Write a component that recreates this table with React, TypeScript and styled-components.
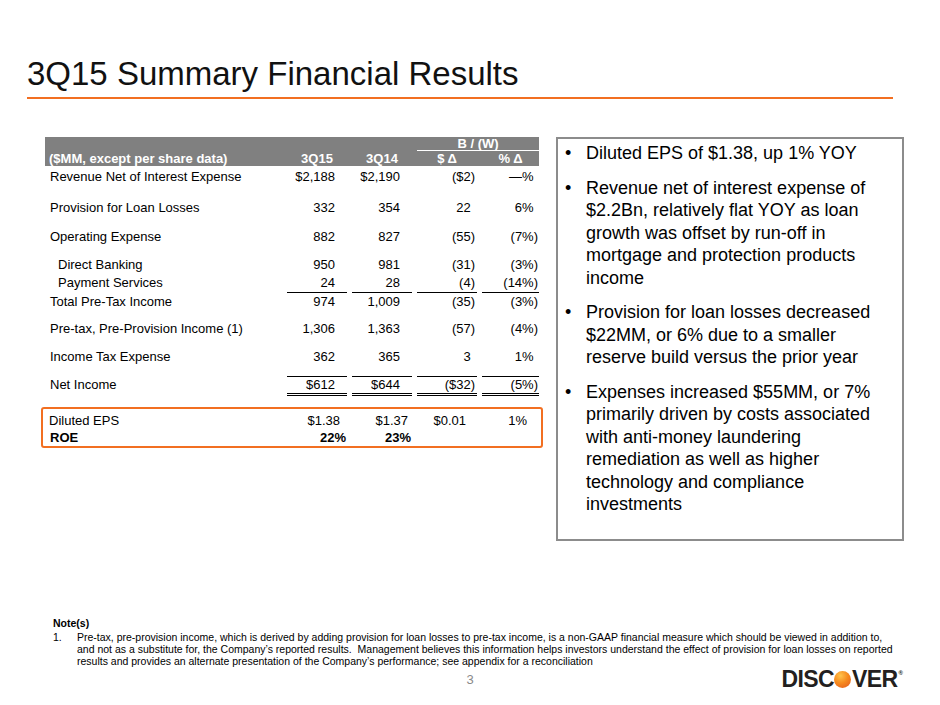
import React from "react";
import styled, { createGlobalStyle } from "styled-components";

const ORANGE = "#f26f21";
const COLS = "237px 60px 60px 60px 57px";

const GlobalStyle = createGlobalStyle`
  html, body {
    margin: 0;
    padding: 0;
    background: #fff;
  }
  body {
    font-family: "Liberation Sans", Arial, Helvetica, sans-serif;
    color: #000;
  }
`;

const Slide = styled.div`
  width: 940px;
  height: 705px;
  overflow: hidden;
  background: #fff;
  display: flex;
  flex-direction: column;
`;

const Title = styled.h1`
  margin: 57px 0 0 27px;
  font-size: 33px;
  line-height: 33px;
  font-weight: 400;
  color: #111;
`;

const TitleRule = styled.div`
  height: 2px;
  background: ${ORANGE};
  margin: 7px 47px 0 27px;
`;

const Body = styled.div`
  display: flex;
  align-items: flex-start;
  gap: 17px;
  margin: 38px 0 0 45px;
`;

/* ---------- table ---------- */

const TableWrap = styled.div`
  width: 494px;
  font-size: 13px;
`;

const HeaderBand = styled.div`
  background: #808080;
  height: 29px;
  color: #fff;
  font-weight: 700;
`;

const Grid = styled.div`
  display: grid;
  grid-template-columns: ${COLS};
  column-gap: 5px;
`;

const GroupRow = styled(Grid)`
  height: 13px;
`;

const GroupLabel = styled.div`
  grid-column: 4 / span 2;
  border-bottom: 1px solid #fff;
  text-align: center;
  line-height: 13px;
`;

const HeadRow = styled(Grid)`
  line-height: 15px;
  padding-top: 1px;
`;

const HeadLabel = styled.div`
  padding-left: 4px;
  white-space: nowrap;
`;

const HeadCell = styled.div`
  text-align: center;
`;

const DataRow = styled(Grid)<{ $mt: number; $lh?: number }>`
  margin-top: ${(p) => p.$mt}px;
  line-height: ${(p) => p.$lh ?? 18}px;
`;

const Label = styled.div<{ $indent?: boolean; $bold?: boolean; $top?: number; $left?: number }>`
  padding-left: ${(p) => p.$left ?? (p.$indent ? 13 : 5)}px;
  padding-top: ${(p) => p.$top ?? 0}px;
  font-weight: ${(p) => (p.$bold ? 700 : 400)};
  white-space: nowrap;
`;

type Rule = "under" | "net" | undefined;

const Value = styled.div<{ $pr: number; $rule?: Rule; $bold?: boolean }>`
  text-align: right;
  padding-right: ${(p) => p.$pr}px;
  font-weight: ${(p) => (p.$bold ? 700 : 400)};
  white-space: nowrap;
  border-bottom: ${(p) =>
    p.$rule === "under" ? "1px solid #000" : p.$rule === "net" ? "3px double #000" : "none"};
  border-top: ${(p) => (p.$rule === "net" ? "1px solid #000" : "none")};
`;

const Ghost = styled.span`
  visibility: hidden;
`;

const EpsBox = styled.div`
  margin: 11px -4px 0;
  border: 2px solid ${ORANGE};
  border-radius: 3px;
  padding: 3px 2px 0;
`;

/* ---------- summary box ---------- */

const SummaryBox = styled.div`
  width: 348px;
  height: 404px;
  box-sizing: border-box;
  border: 2px solid #8c8c8c;
  padding: 3px 12px 0 7px;
  font-size: 18px;
  line-height: 22.5px;
`;

const Bullet = styled.div`
  display: flex;
  & + & {
    margin-top: 12px;
  }
`;

const Dot = styled.span`
  flex: none;
  width: 21px;
`;

/* ---------- footer ---------- */

const Notes = styled.div`
  margin: 76px 0 0 53px;
  font-size: 10.5px;
  line-height: 12px;
  white-space: nowrap;
`;

const NoteTitle = styled.div`
  font-weight: 700;
  margin-bottom: 2px;
`;

const NoteItem = styled.div`
  display: grid;
  grid-template-columns: 24px 1fr;
`;

const BottomRow = styled.div`
  display: grid;
  grid-template-columns: 1fr auto 1fr;
  align-items: center;
  padding: 0 37px;
  margin-top: 2px;
  height: 20px;
`;

const PageNum = styled.div`
  grid-column: 2;
  font-size: 13px;
  color: #8a8a8a;
`;

const Logo = styled.div`
  grid-column: 3;
  justify-self: end;
  display: flex;
  align-items: center;
  font-weight: 700;
  font-size: 23px;
  line-height: 20px;
  letter-spacing: -0.6px;
  color: #231f20;
`;

const Orb = styled.span`
  width: 17px;
  height: 17px;
  margin: 0 1px 0 0;
  border-radius: 50%;
  background: radial-gradient(circle at 38% 28%, #ffc34d 0%, #f68b1f 45%, #e2561b 100%);
`;

const Reg = styled.span`
  align-self: flex-start;
  font-size: 6px;
  line-height: 6px;
  margin: 1px 0 0 1px;
  letter-spacing: 0;
`;

interface Row {
  label: string;
  values: string[];
  mt: number;
  indent?: boolean;
  rule?: Rule;
}

const rows: Row[] = [
  { label: "Revenue Net of Interest Expense", values: ["$2,188", "$2,190", "($2)", "—%"], mt: 2 },
  { label: "Provision for Loan Losses", values: ["332", "354", "22", "6%"], mt: 13 },
  { label: "Operating Expense", values: ["882", "827", "(55)", "(7%)"], mt: 11 },
  { label: "Direct Banking", values: ["950", "981", "(31)", "(3%)"], mt: 10, indent: true },
  { label: "Payment Services", values: ["24", "28", "(4)", "(14%)"], mt: 0, indent: true, rule: "under" },
  { label: "Total Pre-Tax Income", values: ["974", "1,009", "(35)", "(3%)"], mt: 0 },
  { label: "Pre-tax, Pre-Provision Income (1)", values: ["1,306", "1,363", "(57)", "(4%)"], mt: 9 },
  { label: "Income Tax Expense", values: ["362", "365", "3", "1%"], mt: 10 },
  { label: "Net Income", values: ["$612", "$644", "($32)", "(5%)"], mt: 10, rule: "net" },
];

const PAD = [12, 12, 2, 1];

const renderValue = (v: string, col: number) =>
  col >= 2 && !v.endsWith(")") ? (
    <>
      {v}
      <Ghost>)</Ghost>
    </>
  ) : (
    v
  );

const bullets = [
  "Diluted EPS of $1.38, up 1% YOY",
  "Revenue net of interest expense of $2.2Bn, relatively flat YOY as loan growth was offset by run-off in mortgage and protection products income",
  "Provision for loan losses decreased $22MM, or 6% due to a smaller reserve build versus the prior year",
  "Expenses increased $55MM, or 7% primarily driven by costs associated with anti-money laundering remediation as well as higher technology and compliance investments",
];

export default function App() {
  return (
    <>
      <GlobalStyle />
      <Slide>
        <Title>3Q15 Summary Financial Results</Title>
        <TitleRule />
        <Body>
          <TableWrap>
            <HeaderBand>
              <GroupRow>
                <GroupLabel>B / (W)</GroupLabel>
              </GroupRow>
              <HeadRow>
                <HeadLabel>($MM, except per share data)</HeadLabel>
                <HeadCell>3Q15</HeadCell>
                <HeadCell>3Q14</HeadCell>
                <HeadCell>$ Δ</HeadCell>
                <HeadCell>% Δ</HeadCell>
              </HeadRow>
            </HeaderBand>
            {rows.map((r) => (
              <DataRow key={r.label} $mt={r.mt} $lh={r.rule === "net" ? 16 : 18}>
                <Label $indent={r.indent} $top={r.rule === "net" ? 1 : 0}>
                  {r.label}
                </Label>
                {r.values.map((v, i) => (
                  <Value key={i} $pr={PAD[i]} $rule={r.rule}>
                    {renderValue(v, i)}
                  </Value>
                ))}
              </DataRow>
            ))}
            <EpsBox>
              <DataRow $mt={0}>
                <Label $left={4}>Diluted EPS</Label>
                <Value $pr={7}>$1.38</Value>
                <Value $pr={4}>$1.37</Value>
                <Value $pr={11}>$0.01</Value>
                <Value $pr={12}>1%</Value>
              </DataRow>
              <DataRow $mt={0} $lh={16}>
                <Label $bold>ROE</Label>
                <Value $pr={1} $bold>
                  22%
                </Value>
                <Value $pr={1} $bold>
                  23%
                </Value>
              </DataRow>
            </EpsBox>
          </TableWrap>
          <SummaryBox>
            {bullets.map((b) => (
              <Bullet key={b}>
                <Dot>•</Dot>
                <span>{b}</span>
              </Bullet>
            ))}
          </SummaryBox>
        </Body>
        <Notes>
          <NoteTitle>Note(s)</NoteTitle>
          <NoteItem>
            <span>1.</span>
            <span>
              Pre-tax, pre-provision income, which is derived by adding provision for loan losses to pre-tax
              income, is a non-GAAP financial measure which should be viewed in addition to,
              <br />
              and not as a substitute for, the Company’s reported results.&nbsp; Management believes this
              information helps investors understand the effect of provision for loan losses on reported
              <br />
              results and provides an alternate presentation of the Company’s performance; see appendix for a
              reconciliation
            </span>
          </NoteItem>
        </Notes>
        <BottomRow>
          <PageNum>3</PageNum>
          <Logo>
            DISC
            <Orb />
            VER
            <Reg>®</Reg>
          </Logo>
        </BottomRow>
      </Slide>
    </>
  );
}
